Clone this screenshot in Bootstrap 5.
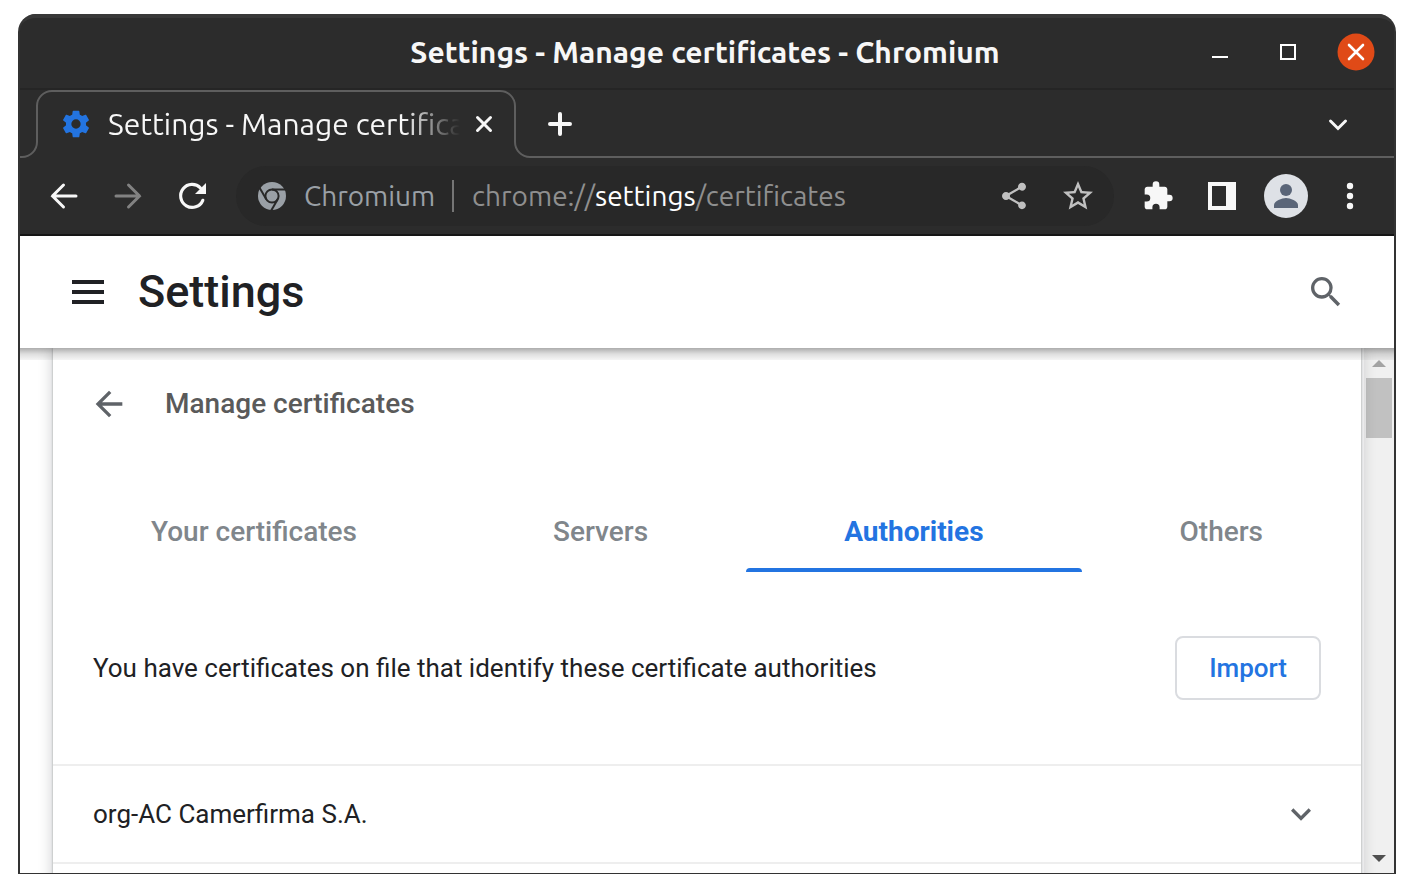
<!DOCTYPE html>
<html lang="en">
<head>
<meta charset="utf-8">
<meta name="viewport" content="width=device-width, initial-scale=1">
<title>Settings - Manage certificates</title>
<link href="https://cdn.jsdelivr.net/npm/bootstrap@5.3.0/dist/css/bootstrap.min.css" rel="stylesheet">
<style>
  body { background: #fff; font-family: Roboto, "Liberation Sans", sans-serif; font-size: 26px; line-height: 32px; color: #202124; }
  button { color: inherit; }
  svg { display: block; flex: none; }
  .desktop { height: 100vh; padding: 14px 18px 19px; }
  .app-window { border: 2px solid #333; border-width: 0 2px 1px; border-radius: 18px 18px 0 0; background: #2c2c2c; }
  .chrome-ui { font-family: Ubuntu, "Noto Sans", "Open Sans", sans-serif; color: #f7f7f7; white-space: nowrap; flex: none; }
  .icon-btn { background: none; border: 0; padding: 0; display: flex; align-items: center; justify-content: center; flex: none; }

  .title-bar { display: grid; grid-template-columns: 1fr auto 1fr; height: 76px; padding: 0 4px 2px 0; border-top: 4px solid #383838; border-bottom: 2px solid #252525; border-radius: 16px 16px 0 0; }
  .title-bar h1 { font-size: 30px; line-height: 36px; font-weight: 700; }
  .title-bar .icon-btn { width: 68px; }

  .tab-strip { height: 68px; }
  .tab-body { width: 448px; border-top: 2px solid #5e5e5e; padding: 0 0 2px 8px; }
  .tab-title { font-size: 30px; line-height: 36px; width: 352px; margin-left: 16px; overflow: hidden; -webkit-mask-image: linear-gradient(90deg, #000 84%, transparent); mask-image: linear-gradient(90deg, #000 84%, transparent); }
  .tab-rest { border-bottom: 2px solid #5e5e5e; padding: 2px 24px 0 0; }
  .edge { stroke: #5e5e5e; stroke-width: 2; fill: none; }
  .w-64 { width: 64px; height: 60px; }

  .tool-bar { height: 78px; padding: 8px 12px; border-bottom: 2px solid #151515; }
  .omnibox { background: #282828; border-radius: 30px; margin: 0 12px; height: 60px; padding: 0 4px 0 22px; font-size: 28px; color: #9aa0a6; }
  .omnibox .origin { width: 130px; margin-left: 18px; }
  .omnibox .rule { width: 2px; height: 32px; background: #757575; margin: 0 18px; }
  .omnibox .dim { color: #8f8f8f; }

  .page-head { background: #fff; height: 112px; flex: none; padding: 0 48px 0 52px; }
  .page-head h2 { font-size: 45px; line-height: 56px; font-weight: 500; margin: 0 0 0 34px; }
  .page-body { background: #fff; min-height: 0; }
  .page-body::before { content: ""; position: absolute; inset: 0 0 auto 0; height: 12px; z-index: 2; background: linear-gradient(rgba(0,0,0,.32), rgba(0,0,0,.13) 50%, rgba(0,0,0,.04)); }
  .sheet { margin: 0 33px; background: #fff; box-shadow: 0 0 2px rgba(60,64,67,.4), 0 2px 12px 2px rgba(60,64,67,.22); z-index: 1; }
  .sheet-head { height: 112px; padding: 0 36px; gap: 36px; color: #5f6368; }
  .sheet-head h3 { font-size: 28px; line-height: 32px; font-weight: 500; color: #5a5a5a; }
  .cert-tabs { margin-top: 32px; }
  .cert-tabs .nav-link { font-size: 28px; line-height: 32px; font-weight: 500; color: #80868b; background: none; padding: 24px 0; border: 0; border-radius: 0; width: 100%; }
  .cert-tabs .nav-link.active { color: #2374e1; font-weight: 700; background: none; }
  .cert-tabs .nav-item { position: relative; }
  .cert-tabs .on::after { content: ""; position: absolute; inset: auto 0 0 0; height: 4px; border-radius: 4px 4px 0 0; background: #2374e1; }
  .import-row { padding: 64px 40px; }
  .btn-import { font-size: 26px; line-height: 32px; font-weight: 500; color: #2374e1; border: 2px solid #dadce0; border-radius: 8px; padding: 14px 32px; }
  .ca-row { border-top: 2px solid #eee; height: 98px; padding: 0 40px; flex: none; }
  .ca-row .icon-btn { color: #5f6368; }
  .scroll-track { position: absolute; inset: 0 0 0 auto; width: 30px; background: #f0f0f0; padding: 12px 2px 10px; }
  .scroll-thumb { background: #c1c1c1; height: 60px; margin-top: 10px; }
</style>
</head>
<body>
<div class="desktop">
<div class="app-window d-flex flex-column h-100 overflow-hidden">

  <header class="chrome-ui">
    <div class="title-bar align-items-center">
      <span></span>
      <h1 class="m-0">Settings - Manage certificates - Chromium</h1>
      <div class="d-flex justify-content-end">
        <button class="icon-btn" aria-label="Minimize"><svg width="20" height="38"><path d="M2 24h16" stroke="#fff" stroke-width="2"/></svg></button>
        <button class="icon-btn" aria-label="Maximize"><svg width="20" height="38"><path d="M3 12h14v14H3z" fill="none" stroke="#fff" stroke-width="2"/></svg></button>
        <button class="icon-btn me-n1" aria-label="Close"><svg width="38" height="38"><circle cx="19" cy="19" r="18.5" fill="#e04a17"/><path d="M12 12l14 14M26 12L12 26" stroke="#fff" stroke-width="2.6" stroke-linecap="round"/></svg></button>
      </div>
    </div>

    <div class="tab-strip d-flex">
      <svg class="edge" width="32" height="68"><path d="M0 67h2A15 15 0 0 0 17 52V16A15 15 0 0 1 32 1"/></svg>
      <div class="tab-body d-flex align-items-center">
        <svg width="32" height="32" viewBox="0 0 24 24" fill="#2374e1"><path d="M19.43 12.98c.04-.32.07-.64.07-.98s-.03-.66-.07-.98l2.11-1.65c.19-.15.24-.42.12-.64l-2-3.46c-.12-.22-.39-.3-.61-.22l-2.49 1c-.52-.4-1.08-.73-1.69-.98l-.38-2.65A.488.488 0 0 0 14 2h-4c-.25 0-.46.18-.49.42l-.38 2.65c-.61.25-1.17.59-1.69.98l-2.49-1c-.23-.09-.49 0-.61.22l-2 3.46c-.13.22-.07.49.12.64l2.11 1.65c-.04.32-.07.65-.07.98s.03.66.07.98l-2.11 1.65c-.19.15-.24.42-.12.64l2 3.46c.12.22.39.3.61.22l2.49-1c.52.4 1.08.73 1.69.98l.38 2.65c.03.24.24.42.49.42h4c.25 0 .46-.18.49-.42l.38-2.65c.61-.25 1.17-.59 1.69-.98l2.49 1c.23.09.49 0 .61-.22l2-3.46c.12-.22.07-.49-.12-.64l-2.11-1.65zM12 15.5a3.5 3.5 0 1 1 0-7 3.5 3.5 0 0 1 0 7z"/></svg>
        <div class="tab-title">Settings - Manage certificates</div>
        <button class="icon-btn ms-auto" aria-label="Close tab"><svg width="32" height="32"><path d="M9.500 9.500l13 13M22.500 9.500l-13 13" stroke="#f7f7f7" stroke-width="3" stroke-linecap="round"/></svg></button>
      </div>
      <svg class="edge" width="32" height="68"><path d="M0 1A15 15 0 0 1 15 16V52A15 15 0 0 0 30 67h2"/></svg>
      <div class="tab-rest flex-grow-1 d-flex align-items-center justify-content-between">
        <button class="icon-btn px-3" aria-label="New tab"><svg width="24" height="24"><path d="M12 2v20M2 12h20" stroke="#f7f7f7" stroke-width="4" stroke-linecap="round"/></svg></button>
        <button class="icon-btn w-64" aria-label="Search tabs"><svg width="24" height="24"><path d="M4.500 9l7.500 7.500L19.500 9" fill="none" stroke="#f7f7f7" stroke-width="3" stroke-linecap="round"/></svg></button>
      </div>
    </div>

    <nav class="tool-bar d-flex align-items-center" aria-label="Toolbar">
      <button class="icon-btn w-64" aria-label="Back"><svg width="32" height="32" fill="none" stroke="#f7f7f7" stroke-width="3" stroke-linecap="round"><path d="M15.500 5L4.500 16l11 11M4.500 16H28"/></svg></button>
      <button class="icon-btn w-64" aria-label="Forward"><svg width="32" height="32" fill="none" stroke="#828282" stroke-width="3" stroke-linecap="round"><path d="M16.500 5l11 11-11 11M27.500 16H4"/></svg></button>
      <button class="icon-btn w-64" aria-label="Reload"><svg width="32" height="32"><path d="M24.500 8A11.500 11.500 0 1 0 26.800 20.300" fill="none" stroke="#f7f7f7" stroke-width="3.200" stroke-linecap="round"/><path d="M30 3v11H19z" fill="#f7f7f7"/></svg></button>

      <div class="omnibox d-flex align-items-center flex-grow-1">
        <svg width="28" height="28" viewBox="-14 -14 28 28"><circle r="14" fill="#9aa0a6"/><g fill="none" stroke="#282828" stroke-width="2"><circle r="6.600"/><path id="vane" d="M0-6.600H14"/><use href="#vane" transform="rotate(120)"/><use href="#vane" transform="rotate(240)"/></g></svg>
        <span class="origin">Chromium</span>
        <span class="rule"></span>
        <div class="flex-grow-1" role="textbox" aria-label="Address"><span class="dim">chrome://</span><span class="text-white">settings</span><span class="dim">/certificates</span></div>
        <button class="icon-btn w-64" aria-label="Share"><svg width="32" height="32" viewBox="0 0 24 24" fill="#c0c0c0"><path d="M18 16.080c-.76 0-1.440.3-1.960.77L8.910 12.700c.05-.23.09-.46.09-.7s-.04-.47-.09-.7l7.050-4.110c.54.5 1.250.81 2.040.81 1.660 0 3-1.340 3-3s-1.340-3-3-3-3 1.340-3 3c0 .24.040.47.090.7L8.040 9.810C7.500 9.310 6.790 9 6 9c-1.660 0-3 1.340-3 3s1.340 3 3 3c.79 0 1.500-.31 2.040-.81l7.120 4.160c-.05.21-.08.43-.08.65 0 1.610 1.310 2.920 2.920 2.920s2.920-1.310 2.920-2.920-1.310-2.920-2.920-2.920z"/></svg></button>
        <button class="icon-btn w-64" aria-label="Bookmark"><svg width="36" height="36" viewBox="0 0 24 24" fill="#c0c0c0"><path d="M22 9.240l-7.190-.62L12 2 9.190 8.630 2 9.240l5.460 4.730L5.820 21 12 17.270 18.180 21l-1.630-7.030L22 9.240zM12 15.400l-3.760 2.270 1-4.280-3.320-2.880 4.380-.38L12 6.100l1.710 4.040 4.380.38-3.320 2.880 1 4.280L12 15.400z"/></svg></button>
      </div>

      <button class="icon-btn w-64" aria-label="Extensions"><svg width="32" height="32" viewBox="0 0 24 24" fill="#f7f7f7"><path d="M20.500 11H19V7c0-1.100-.9-2-2-2h-4V3.500a2.500 2.500 0 0 0-5 0V5H4c-1.100 0-1.990.9-1.990 2v3.800H3.500a2.700 2.700 0 0 1 0 5.400H2V20c0 1.100.9 2 2 2h3.800v-1.500a2.700 2.700 0 0 1 5.400 0V22H17c1.100 0 2-.9 2-2v-4h1.500a2.500 2.500 0 0 0 0-5z"/></svg></button>
      <button class="icon-btn w-64" aria-label="Side panel"><svg width="28" height="28"><path d="M0 0h28v28H0zM4 4v20h14V4z" fill="#f7f7f7" fill-rule="evenodd"/></svg></button>
      <button class="icon-btn w-64" aria-label="Profile"><svg width="44" height="44"><circle cx="22" cy="22" r="22" fill="#dee1e6"/><circle cx="22" cy="16" r="6" fill="#5a6578"/><path d="M10 34v-3c0-4 8-7 12-7s12 3 12 7v3z" fill="#5a6578"/></svg></button>
      <button class="icon-btn w-64" aria-label="Menu"><svg width="8" height="32" fill="#f7f7f7"><circle cx="4" cy="6" r="3.200"/><circle cx="4" cy="16" r="3.200"/><circle cx="4" cy="26" r="3.200"/></svg></button>
    </nav>
  </header>

  <div class="page-head d-flex align-items-center justify-content-between">
    <div class="d-flex align-items-center">
      <button class="icon-btn" aria-label="Main menu"><svg width="32" height="24" fill="#202124"><path d="M0 0h32v4H0zM0 10h32v4H0zM0 20h32v4H0z"/></svg></button>
      <h2>Settings</h2>
    </div>
    <button class="icon-btn" aria-label="Search settings"><svg width="40" height="40" viewBox="0 0 24 24" fill="#5f6368"><path d="M15.500 14h-.79l-.28-.27A6.471 6.471 0 0 0 16 9.500 6.500 6.500 0 1 0 9.500 16c1.610 0 3.090-.59 4.230-1.570l.27.28v.79l5 4.990L20.490 19l-4.990-5zm-6 0C7.010 14 5 11.990 5 9.500S7.010 5 9.500 5 14 7.010 14 9.500 11.990 14 9.500 14z"/></svg></button>
  </div>

  <main class="page-body position-relative flex-grow-1 overflow-hidden d-flex flex-column">
    <div class="scroll-track" aria-hidden="true">
      <div class="d-flex flex-column align-items-center h-100">
        <svg width="14" height="8"><path d="M0 7L7 0l7 7z" fill="#a3a3a3"/></svg>
        <div class="scroll-thumb w-100"></div>
        <svg class="mt-auto" width="14" height="8"><path d="M0 0h14L7 7z" fill="#505050"/></svg>
      </div>
    </div>

    <section class="sheet position-relative flex-grow-1">
      <div class="sheet-head d-flex align-items-center">
        <button class="icon-btn" aria-label="Go back"><svg width="40" height="40" viewBox="0 0 24 24" fill="#5f6368"><path d="M20 11H7.830l5.590-5.590L12 4l-8 8 8 8 1.410-1.410L7.830 13H20v-2z"/></svg></button>
        <h3 class="m-0">Manage certificates</h3>
      </div>

      <ul class="cert-tabs nav nav-fill flex-nowrap" role="tablist">
        <li class="nav-item" role="presentation"><button class="nav-link" role="tab">Your certificates</button></li>
        <li class="nav-item" role="presentation"><button class="nav-link" role="tab">Servers</button></li>
        <li class="nav-item on" role="presentation"><button class="nav-link active" role="tab" aria-selected="true">Authorities</button></li>
        <li class="nav-item" role="presentation"><button class="nav-link" role="tab">Others</button></li>
      </ul>

      <div class="import-row d-flex align-items-center justify-content-between">
        <span>You have certificates on file that identify these certificate authorities</span>
        <button class="btn btn-import">Import</button>
      </div>

      <div class="ca-row d-flex align-items-center justify-content-between">
        <span>org-AC Camerfirma S.A.</span>
        <button class="icon-btn" aria-label="Expand"><svg width="40" height="40" viewBox="0 0 24 24" fill="#5f6368"><path d="M16.590 8.590L12 13.170 7.410 8.590 6 10l6 6 6-6z"/></svg></button>
      </div>
      <div class="ca-row"></div>
    </section>
  </main>
</div>
</div>
<script src="https://cdn.jsdelivr.net/npm/bootstrap@5.3.0/dist/js/bootstrap.bundle.min.js"></script>
</body>
</html>
